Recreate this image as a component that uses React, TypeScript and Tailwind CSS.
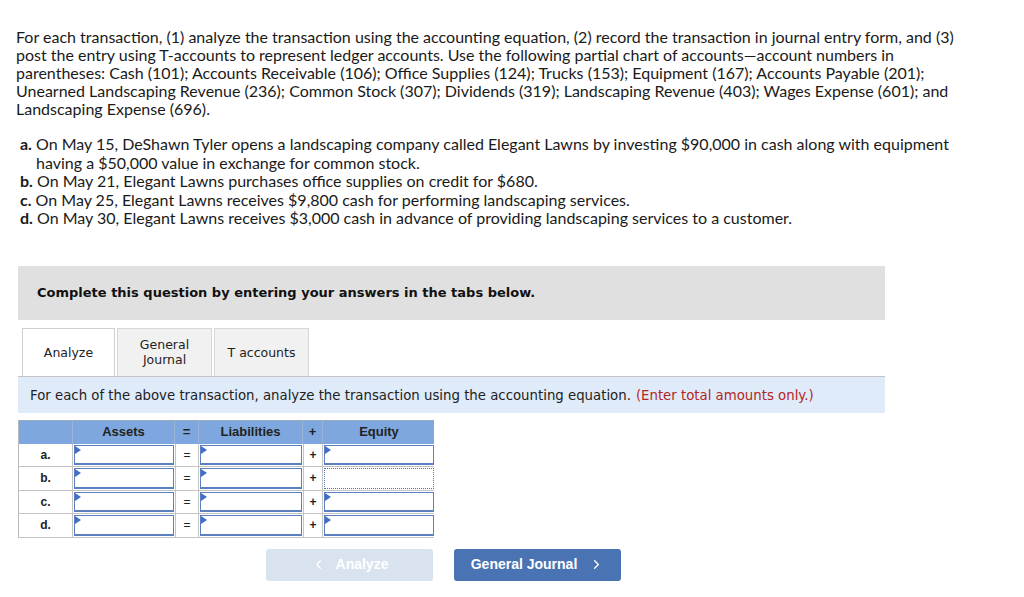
import { ChevronLeft, ChevronRight } from 'lucide-react'

// Строки таблицы уравнения
const ROWS = ['a.', 'b.', 'c.', 'd.']

function Cell({ dotted = false }: { dotted?: boolean }) {
  return (
    <div className="h-full p-px">
      <div
        className={`relative h-full bg-white ${
          dotted ? 'border border-dotted border-[#4f74b8]' : 'border border-[#5b7fc0] shadow-[inset_0_-1px_0_#5b7fc0]'
        }`}
      >
        {!dotted && (
          <span className="absolute left-0 top-0 w-0 h-0 border-t-[4px] border-b-[4px] border-l-[6px] border-t-transparent border-b-transparent border-l-[#3f6fc6]" />
        )}
      </div>
    </div>
  )
}

export default function App() {
  return (
    <div className="w-[1024px] h-[597px] bg-white overflow-hidden text-[#222]">
      {/* Условие задачи */}
      <div className="pl-[16px] pt-[28px] font-['Lato',sans-serif] text-[16px] leading-[18px] text-[#1a1a1a] whitespace-nowrap">
        <p>
          For each transaction, (1) analyze the transaction using the accounting equation, (2) record the transaction in
          journal entry form, and (3)
          <br />
          post the entry using T-accounts to represent ledger accounts. Use the following partial chart of
          accounts—account numbers in
          <br />
          parentheses: Cash (101); Accounts Receivable (106); Office Supplies (124); Trucks (153); Equipment (167);
          Accounts Payable (201);
          <br />
          Unearned Landscaping Revenue (236); Common Stock (307); Dividends (319); Landscaping Revenue (403); Wages
          Expense (601); and
          <br />
          Landscaping Expense (696).
        </p>
        <div className="mt-[17px] pl-[4px] leading-[18.5px]">
          <p>
            <b>a.</b> On May 15, DeShawn Tyler opens a landscaping company called Elegant Lawns by investing $90,000 in
            cash along with equipment
            <br />
            <span className="pl-[16px]">having a $50,000 value in exchange for common stock.</span>
          </p>
          <p>
            <b>b.</b> On May 21, Elegant Lawns purchases office supplies on credit for $680.
          </p>
          <p>
            <b>c.</b> On May 25, Elegant Lawns receives $9,800 cash for performing landscaping services.
          </p>
          <p>
            <b>d.</b> On May 30, Elegant Lawns receives $3,000 cash in advance of providing landscaping services to a
            customer.
          </p>
        </div>
      </div>

      {/* Блок с вкладками */}
      <div className="ml-[18px] w-[867px] mt-[38px] font-['DejaVu_Sans',sans-serif]">
        <div className="h-[54px] bg-[#e0e0e0] flex items-center pl-[19px] text-[13px] font-bold text-[#111]">
          Complete this question by entering your answers in the tabs below.
        </div>

        <div className="mt-[8px] pl-[4px] flex gap-[2px] text-[12.5px] leading-[15px] text-[#222]">
          <div className="w-[93px] h-[48px] bg-white border border-b-0 border-[#cfcfcf] flex items-center justify-center relative z-10 -mb-px">
            Analyze
          </div>
          <div className="w-[95px] h-[48px] bg-[#f1f1f1] border border-b-0 border-[#d6d6d6] flex items-center justify-center text-center">
            General
            <br />
            Journal
          </div>
          <div className="w-[95px] h-[48px] bg-[#f1f1f1] border border-b-0 border-[#d6d6d6] flex items-center justify-center">
            T accounts
          </div>
        </div>

        <div className="h-[37px] bg-[#dfebf8] border-t border-[#c4c4c4] flex items-center pl-[12px] pt-[2px] text-[13.3px] text-[#222]">
          For each of the above transaction, analyze the transaction using the accounting equation.
          <span className="ml-[5px] text-[#b3261e]">(Enter total amounts only.)</span>
        </div>

        {/* Таблица уравнения */}
        <div className="mt-[7px] w-[416px] font-['Liberation_Sans',sans-serif] border-l border-[#b9b9b9]">
          <div className="grid grid-cols-[54px_102px_24px_104px_20px_112px] h-[24px] bg-[#7ea7df] text-[13px] font-bold text-[#222] border-t border-[#9ab]">
            <div className="border-r border-[#9bb5d9]" />
            <div className="flex items-center justify-center border-r border-[#9bb5d9]">Assets</div>
            <div className="flex items-center justify-center border-r border-[#9bb5d9]">=</div>
            <div className="flex items-center justify-center border-r border-[#9bb5d9]">Liabilities</div>
            <div className="flex items-center justify-center border-r border-[#9bb5d9]">+</div>
            <div className="flex items-center justify-center">Equity</div>
          </div>
          {ROWS.map((r, i) => (
            <div
              key={r}
              className="grid grid-cols-[54px_102px_24px_104px_20px_112px] h-[23.5px] text-[12px] text-[#222] border-b border-[#c4c4c4]"
            >
              <div className="flex items-center justify-center font-bold border-r border-[#c4c4c4]">{r}</div>
              <Cell />
              <div className="flex items-center justify-center border-x border-[#c4c4c4]">=</div>
              <Cell />
              <div className="flex items-center justify-center border-x border-[#c4c4c4] font-bold">+</div>
              <Cell dotted={i === 1} />
            </div>
          ))}
        </div>

        {/* Навигация */}
        <div className="mt-[11px] ml-[248px] flex gap-[21px] font-['Liberation_Sans',sans-serif] text-[14px] font-bold text-white">
          <div className="w-[167px] h-[32px] rounded-[3px] bg-[#d9e3f0] flex items-center justify-center gap-[10px]">
            <ChevronLeft size={15} strokeWidth={2} />
            Analyze
          </div>
          <div className="w-[167px] h-[32px] rounded-[3px] bg-[#4a73b3] flex items-center justify-center gap-[12px]">
            General Journal
            <ChevronRight size={15} strokeWidth={2.2} />
          </div>
        </div>
      </div>
    </div>
  )
}
